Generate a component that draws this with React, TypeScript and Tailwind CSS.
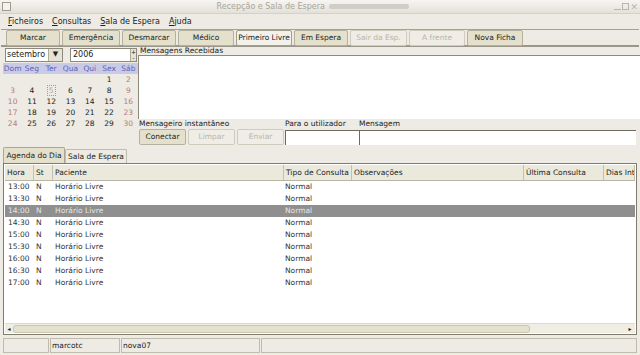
import React from "react";

const toolbar = [
  { label: "Marcar", w: "w-[54px]" },
  { label: "Emergência", w: "w-[58px]" },
  { label: "Desmarcar", w: "w-[54px]" },
  { label: "Médico", w: "w-[56px]" },
  { label: "Primeiro Livre", w: "w-[56px]", active: true },
  { label: "Em Espera", w: "w-[54px]" },
  { label: "Sair da Esp.", w: "w-[57px]", disabled: true },
  { label: "A frente", w: "w-[56px]", disabled: true },
  { label: "Nova Ficha", w: "w-[56px]" },
];

const weeks = [
  ["", "", "", "", "", "1", "2"],
  ["3", "4", "5", "6", "7", "8", "9"],
  ["10", "11", "12", "13", "14", "15", "16"],
  ["17", "18", "19", "20", "21", "22", "23"],
  ["24", "25", "26", "27", "28", "29", "30"],
];

const hours = ["13:00", "13:30", "14:00", "14:30", "15:00", "15:30", "16:00", "16:30", "17:00"];

function GtkButton({ label, w, disabled, active }: { label: string; w: string; disabled?: boolean; active?: boolean }) {
  return (
    <div
      className={`${w} h-[16px] flex items-center justify-center rounded-[2px] border ${
        disabled
          ? "border-[#cfccbe] bg-[#efede6] text-[#b8b5a8]"
          : active
          ? "border-[#a19e8e] bg-[#f2f1ea] text-[#222]"
          : "border-[#b5b19f] bg-[#e4e0cc] text-[#222]"
      }`}
    >
      {label}
    </div>
  );
}

function Calendar() {
  return (
    <div className="w-[138px] flex flex-col pl-[3px]">
      <div className="flex items-center h-[15px] gap-[7px] pl-[2px]">
        <div className="flex h-[14px] w-[58px] border border-[#8d8a7c] bg-white">
          <span className="flex-1 pl-[1px] leading-[12px] text-[8px]">setembro</span>
          <div className="w-[14px] bg-[#e6e3d4] border-l border-[#b0ac9a] flex items-center justify-center text-[7px]">▼</div>
        </div>
        <div className="flex h-[14px] w-[67px] border border-[#8d8a7c] bg-white">
          <span className="flex-1 pl-[2px] leading-[12px] text-[8px]">2006</span>
          <div className="w-[6px] bg-[#e6e3d4] border-l border-[#b0ac9a] flex flex-col text-[6px] leading-[6px] items-center overflow-hidden">
            <span>+</span>
            <span>-</span>
          </div>
        </div>
      </div>
      <div className="mt-[1px] grid grid-cols-7 h-[11px] bg-[#c9cae5] text-[#5d63b8] items-center">
        {["Dom", "Seg", "Ter", "Qua", "Qui", "Sex", "Sáb"].map((d) => (
          <span key={d} className="text-center">{d}</span>
        ))}
      </div>
      {weeks.map((wk, i) => (
        <div key={i} className="grid grid-cols-7 h-[11px] items-center">
          {wk.map((d, j) => (
            <span
              key={j}
              className={`text-center text-[7.5px] ${j === 0 || j === 6 ? "text-[#b87a7c]" : "text-[#222]"} ${
                d === "5" ? "text-[#aaa]" : ""
              }`}
            >
              {d === "5" ? <span className="border border-dotted border-[#999] px-[1px]">{d}</span> : d}
            </span>
          ))}
        </div>
      ))}
    </div>
  );
}

function Messages() {
  return (
    <div className="flex-1 flex flex-col">
      <div className="h-[8px] leading-[8px] pl-[2px]">Mensagens Recebidas</div>
      <div className="h-[64px] bg-white border-t border-l border-[#8e8b7d]" />
      <div className="flex h-[10px] leading-[10px]">
        <span className="w-[147px] pl-[1px]">Mensageiro instantâneo</span>
        <span className="w-[74px]">Para o utilizador</span>
        <span>Mensagem</span>
      </div>
      <div className="flex h-[16px] items-center">
        <div className="flex gap-[2px] w-[147px] pl-[1px]">
          <GtkButton label="Conectar" w="w-[47px]" />
          <GtkButton label="Limpar" w="w-[47px]" disabled />
          <GtkButton label="Enviar" w="w-[47px]" disabled />
        </div>
        <div className="w-[74px] h-[15px] bg-white border-t border-l border-[#6e6b5e]" />
        <div className="flex-1 mr-[4px] h-[15px] bg-white border-t border-l border-[#6e6b5e]" />
      </div>
    </div>
  );
}

function AgendaTable() {
  const cols = [
    { t: "Hora", w: "w-[29px]" },
    { t: "St", w: "w-[19px]" },
    { t: "Paciente", w: "w-[231px]" },
    { t: "Tipo de Consulta", w: "w-[68px]" },
    { t: "Observações", w: "w-[172px]" },
    { t: "Última Consulta", w: "w-[80px]" },
    { t: "Dias Int", w: "flex-1" },
  ];
  return (
    <div className="flex-1 mx-[3px] border border-[#7f7c6e] bg-white flex flex-col overflow-hidden">
      <div className="flex h-[16px] bg-[#ebe9dc] border-b border-[#b9b6a6] mx-[1px] mt-[1px]">
        {cols.map((c) => (
          <div key={c.t} className={`${c.w} border-r border-[#c4c1b0] pl-[2px] leading-[15px] whitespace-nowrap overflow-hidden`}>
            {c.t}
          </div>
        ))}
      </div>
      <div className="flex-1">
        {hours.map((h) => {
          const sel = h === "14:00";
          return (
            <div
              key={h}
              className={`flex h-[12px] leading-[12px] mx-[1px] ${sel ? "bg-[#8f8f8f] text-[#e4e4e4]" : "text-[#333]"}`}
            >
              <span className="w-[29px] pl-[3px]">{h}</span>
              <span className="w-[19px] pl-[2px]">N</span>
              <span className="w-[231px] pl-[2px]">Horário Livre</span>
              <span className="w-[68px] pl-[1px]">Normal</span>
            </div>
          );
        })}
      </div>
      <div className="h-[10px] mb-[1px] mx-[1px] flex items-center bg-[#efede4] border-t border-[#dcdacd]">
        <span className="w-[8px] text-[6px] text-center">◂</span>
        <div className="w-[517px] h-[8px] rounded-[3px] border border-[#c9c5b0] bg-[#e4e1cd]" />
        <div className="flex-1" />
        <span className="w-[10px] text-[6px] text-center">▸</span>
      </div>
    </div>
  );
}

export default function App() {
  return (
    <div
      className="w-[640px] h-[355px] bg-[#edebe3] text-[7.5px] text-[#222] flex flex-col overflow-hidden"
      style={{ fontFamily: '"DejaVu Sans", sans-serif' }}
    >
      {/* Title bar */}
      <div className="h-[14px] flex items-center bg-gradient-to-b from-[#f6f5f1] to-[#e3e1d9] border-b border-[#d4d2c8]">
        <div className="ml-[2px] w-[9px] h-[9px] border border-[#a09d90] bg-[#f3f2ec]" />
        <div className="flex-1 flex justify-center items-center gap-[4px] text-[#a8a59c] text-[8px]">
          <span>Recepção e Sala de Espera</span>
          <div className="w-[80px] h-[5px] bg-[#cfcdc6] rounded-[2px]" />
        </div>
        <div className="flex gap-[1px] mr-[2px] text-[#b9b6ad]">
          <div className="w-[7px] h-[7px] border-b border-[#b9b6ad]" />
          <div className="w-[7px] h-[7px] border border-[#b9b6ad]" />
          <span className="text-[9px] leading-[8px]">✕</span>
        </div>
      </div>
      {/* Menu */}
      <div className="h-[15px] flex items-center gap-[9px] pl-[8px] text-[8px]">
        <span><u>F</u>icheiros</span>
        <span><u>C</u>onsultas</span>
        <span><u>S</u>ala de Espera</span>
        <span><u>A</u>juda</span>
      </div>
      {/* Toolbar */}
      <div className="h-[18px] flex items-center gap-[2px] pl-[5px] border-t border-[#a4a194] border-b-2 border-b-[#9a978a] mx-[1px]">
        {toolbar.map((b) => (
          <GtkButton key={b.label} {...b} />
        ))}
      </div>
      {/* Upper section */}
      <div className="h-[98px] flex">
        <Calendar />
        <Messages />
      </div>
      {/* Tabs */}
      <div className="h-[16px] flex items-end pl-[3px] mt-[2px]">
        <div className="h-[16px] w-[62px] bg-[#e4e0cc] border border-b-0 border-[#aaa692] rounded-t-[2px] flex items-center justify-center">
          Agenda do Dia
        </div>
        <div className="h-[14px] w-[62px] border border-b-0 border-[#c0bcaa] rounded-t-[2px] flex items-center justify-center">
          Sala de Espera
        </div>
      </div>
      <AgendaTable />
      {/* Status bar */}
      <div className="h-[17px] flex items-center px-[3px] gap-[1px] mt-[2px] mb-[1px]">
        <div className="w-[46px] h-[15px] border border-[#bfbcae]" />
        <div className="w-[70px] h-[15px] border border-[#bfbcae] pl-[1px] leading-[13px]">marcotc</div>
        <div className="w-[139px] h-[15px] border border-[#bfbcae] pl-[1px] leading-[13px]">nova07</div>
        <div className="flex-1 h-[15px] border border-[#bfbcae]" />
      </div>
    </div>
  );
}
